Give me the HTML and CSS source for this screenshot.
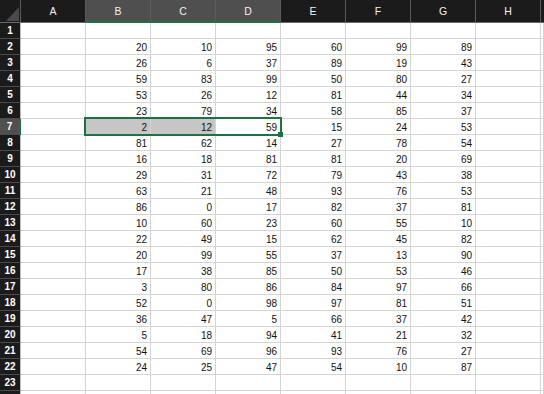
FILE: index.html
```html
<!DOCTYPE html>
<html>
<head>
<meta charset="utf-8">
<title>Hoja1</title>
<link rel="stylesheet" href="styles.css">
</head>
<body>
<div class="hoja">
<table class="celdas">
<tr class="cols">
<th class="esquina"><svg width="13" height="14" viewBox="0 0 13 14"><polygon points="13,0 13,14 0,14" fill="#4a4a4a"/></svg></th>
<th>A</th><th class="sel">B</th><th class="sel">C</th><th class="sel">D</th><th>E</th><th>F</th><th>G</th><th>H</th><th class="resto"></th>
</tr>
<tr><th>1</th><td></td><td></td><td></td><td></td><td></td><td></td><td></td><td></td><td></td></tr>
<tr><th>2</th><td></td><td>20</td><td>10</td><td>95</td><td>60</td><td>99</td><td>89</td><td></td><td></td></tr>
<tr><th>3</th><td></td><td>26</td><td>6</td><td>37</td><td>89</td><td>19</td><td>43</td><td></td><td></td></tr>
<tr><th>4</th><td></td><td>59</td><td>83</td><td>99</td><td>50</td><td>80</td><td>27</td><td></td><td></td></tr>
<tr><th>5</th><td></td><td>53</td><td>26</td><td>12</td><td>81</td><td>44</td><td>34</td><td></td><td></td></tr>
<tr><th>6</th><td></td><td>23</td><td>79</td><td>34</td><td>58</td><td>85</td><td>37</td><td></td><td></td></tr>
<tr><th class="fila-sel">7</th><td></td><td class="marcada">2</td><td class="marcada">12</td><td>59</td><td>15</td><td>24</td><td>53</td><td></td><td></td></tr>
<tr><th>8</th><td></td><td>81</td><td>62</td><td>14</td><td>27</td><td>78</td><td>54</td><td></td><td></td></tr>
<tr><th>9</th><td></td><td>16</td><td>18</td><td>81</td><td>81</td><td>20</td><td>69</td><td></td><td></td></tr>
<tr><th>10</th><td></td><td>29</td><td>31</td><td>72</td><td>79</td><td>43</td><td>38</td><td></td><td></td></tr>
<tr><th>11</th><td></td><td>63</td><td>21</td><td>48</td><td>93</td><td>76</td><td>53</td><td></td><td></td></tr>
<tr><th>12</th><td></td><td>86</td><td>0</td><td>17</td><td>82</td><td>37</td><td>81</td><td></td><td></td></tr>
<tr><th>13</th><td></td><td>10</td><td>60</td><td>23</td><td>60</td><td>55</td><td>10</td><td></td><td></td></tr>
<tr><th>14</th><td></td><td>22</td><td>49</td><td>15</td><td>62</td><td>45</td><td>82</td><td></td><td></td></tr>
<tr><th>15</th><td></td><td>20</td><td>99</td><td>55</td><td>37</td><td>13</td><td>90</td><td></td><td></td></tr>
<tr><th>16</th><td></td><td>17</td><td>38</td><td>85</td><td>50</td><td>53</td><td>46</td><td></td><td></td></tr>
<tr><th>17</th><td></td><td>3</td><td>80</td><td>86</td><td>84</td><td>97</td><td>66</td><td></td><td></td></tr>
<tr><th>18</th><td></td><td>52</td><td>0</td><td>98</td><td>97</td><td>81</td><td>51</td><td></td><td></td></tr>
<tr><th>19</th><td></td><td>36</td><td>47</td><td>5</td><td>66</td><td>37</td><td>42</td><td></td><td></td></tr>
<tr><th>20</th><td></td><td>5</td><td>18</td><td>94</td><td>41</td><td>21</td><td>32</td><td></td><td></td></tr>
<tr><th>21</th><td></td><td>54</td><td>69</td><td>96</td><td>93</td><td>76</td><td>27</td><td></td><td></td></tr>
<tr><th>22</th><td></td><td>24</td><td>25</td><td>47</td><td>54</td><td>10</td><td>87</td><td></td><td></td></tr>
<tr><th>23</th><td></td><td></td><td></td><td></td><td></td><td></td><td></td><td></td><td></td></tr>
<tr><th></th><td></td><td></td><td></td><td></td><td></td><td></td><td></td><td></td><td></td></tr>
</table>
<div class="seleccion"><div class="tirador"></div></div>
</div>
</body>
</html>
```

FILE: styles.css
```css
body{
	margin:0;
	background:#fff;
	overflow:hidden;
	font-family:"Liberation Sans",Arial,sans-serif;
}
.hoja{
	position:relative;
	width:544px;
	height:394px;
	overflow:hidden;
}
.celdas{
	width:544px;
	table-layout:fixed;
	border-collapse:separate;
	border-spacing:0;
	font-size:10px;
	color:#111;
}
.celdas th,
.celdas td{
	box-sizing:border-box;
	padding:0;
}
.celdas tr{
	height:16px;
}
.celdas td{
	border-right:1px solid #d4d4d4;
	border-bottom:1px solid #d4d4d4;
	text-align:right;
	vertical-align:bottom;
	line-height:12px;
	padding-right:3px;
	white-space:nowrap;
	overflow:hidden;
}
.celdas td.marcada{
	background:#c6c6c6;
}

/* cabecera de columnas */
.cols{
	height:23px !important;
}
.cols th{
	width:65px;
	background:#1b1b1b;
	color:#f2f2f2;
	font-weight:normal;
	font-size:10.5px;
	border-right:1px solid #5a5a5a;
	border-bottom:1px solid #6a6a6a;
	vertical-align:middle;
	padding-bottom:1px;
}
.cols th.esquina{
	width:21px;
	border-right:1px solid #5a5a5a;
	text-align:right;
	vertical-align:bottom;
	padding:0 1px 1px 0;
	line-height:0;
}
.cols th.sel{
	background:#4f4f4f;
	border-right-color:#5c5c5c;
	border-bottom:2px solid #1e7145;
	padding-bottom:0;
}
.cols th.resto{
	width:auto;
	border-right:none;
}

/* numeros de fila */
.celdas tr th{
	background:#1b1b1b;
}
.celdas tr:not(.cols) th{
	color:#fff;
	font-weight:bold;
	font-size:10px;
	line-height:12px;
	text-align:center;
	border-bottom:1px solid #4a4a4a;
	border-right:1px solid #bdbdbd;
}
.celdas tr th.fila-sel{
	background:#505050;
	border-right:2px solid #1e7145;
}

/* rango seleccionado B7:D7 */
.seleccion{
	position:absolute;
	left:84px;
	top:117px;
	width:198px;
	height:19px;
	box-sizing:border-box;
	border:2px solid #1e7145;
}
.tirador{
	position:absolute;
	right:-3px;
	bottom:-3px;
	width:5px;
	height:5px;
	background:#1e7145;
}
```
